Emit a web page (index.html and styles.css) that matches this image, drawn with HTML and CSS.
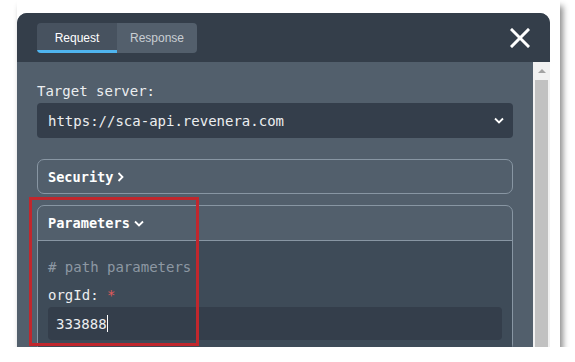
FILE: index.html
```html
<!DOCTYPE html>
<html lang="en">
<head>
  <meta charset="UTF-8">
  <meta name="viewport" content="width=device-width, initial-scale=1.0">
  <title>Try it - Request</title>
  <link rel="stylesheet" href="styles.css">
</head>
<body>
  <div class="shot">
    <div class="panel">
      <div class="panel-head">
        <div class="tabs">
          <div class="tab active">Request</div>
          <div class="tab">Response</div>
        </div>
        <svg class="close" width="20" height="20" viewBox="0 0 20 20">
          <path d="M2 2 L18 18 M18 2 L2 18" stroke="#fff" stroke-width="3" stroke-linecap="square"/>
        </svg>
      </div>

      <div class="panel-body">
        <div class="content">
          <div class="label">Target server:</div>
          <div class="select">
            <span>https://sca-api.revenera.com</span>
            <svg width="10" height="7" viewBox="0 0 10 7">
              <path d="M1 1.5 L5 5.5 L9 1.5" fill="none" stroke="#fff" stroke-width="1.8"/>
            </svg>
          </div>

          <div class="section">
            <div class="section-head">
              Security
              <svg width="7" height="10" viewBox="0 0 7 10">
                <path d="M1.5 1 L5.5 5 L1.5 9" fill="none" stroke="#fff" stroke-width="1.8"/>
              </svg>
            </div>
          </div>

          <div class="section open">
            <div class="section-head">
              Parameters
              <svg width="10" height="7" viewBox="0 0 10 7">
                <path d="M1 1.5 L5 5.5 L9 1.5" fill="none" stroke="#fff" stroke-width="1.8"/>
              </svg>
            </div>
            <div class="section-body">
              <div class="comment"># path parameters</div>
              <div class="field-label">orgId: <span class="req">*</span></div>
              <div class="input">333888<span class="caret"></span></div>
            </div>
          </div>
        </div>

        <div class="scrollbar">
          <div class="arrow"></div>
          <div class="thumb"></div>
        </div>
      </div>
    </div>

    <!-- annotation box -->
    <div class="highlight"></div>
  </div>
</body>
</html>
```

FILE: styles.css
```css
body {
  margin: 0;
  background: #fff;
  font-family: "DejaVu Sans Mono", "Liberation Mono", monospace;
}
.shot {
  position: relative;
  width: 533px;
  height: 334px;
  margin-left: 17px;
  padding: 13px 10px 0 0;
  background: #fff;
  box-shadow: 3px 6px 6px rgba(0, 0, 0, 0.45);
}
.panel {
  height: 334px;
  border-radius: 10px 10px 0 0;
  overflow: hidden;
  background: #525f6c;
  display: flex;
  flex-direction: column;
}
.panel-head {
  height: 49px;
  box-sizing: border-box;
  padding: 10px 20px;
  background: #343e4a;
  display: flex;
  justify-content: space-between;
  align-items: center;
}
.tabs {
  display: flex;
  height: 30px;
  border-radius: 4px;
  overflow: hidden;
  font-family: "Liberation Sans", Arial, sans-serif;
  font-size: 12px;
}
.tab {
  width: 80px;
  box-sizing: border-box;
  display: flex;
  align-items: center;
  justify-content: center;
  background: #535f6c;
  color: #c9ced3;
}
.tab.active {
  background: #47525f;
  color: #fff;
  border-bottom: 3px solid #4fb4ef;
  padding-top: 3px;
}
.close {
  display: block;
}
.panel-body {
  flex: 1;
  display: flex;
  min-height: 0;
}
.content {
  flex: 1;
  padding: 19px 20px 0;
  color: #eceef0;
  font-size: 14px;
}
.label {
  line-height: 20px;
  margin-bottom: 2px;
}
.select {
  height: 35px;
  box-sizing: border-box;
  padding: 0 9px 0 11px;
  background: #343e4b;
  border-radius: 4px;
  display: flex;
  align-items: center;
  justify-content: space-between;
}
.section {
  margin-top: 21px;
  border: 1px solid #8896a3;
  border-radius: 7px;
}
.section + .section {
  margin-top: 11px;
}
.section-head {
  height: 33px;
  padding-left: 10px;
  display: flex;
  align-items: center;
  gap: 4px;
  font-weight: bold;
  color: #fff;
  font-size: 13.6px;
}
.section.open .section-head {
  height: 34px;
  border-bottom: 1px solid #8896a3;
}
.section-body {
  background: #3e4b58;
  padding: 16px 10px 10px;
}
.comment {
  color: #8d98a3;
  line-height: 20px;
}
.field-label {
  line-height: 20px;
  margin-top: 8px;
}
.req {
  color: #e05a5a;
}
.input {
  height: 33px;
  margin-top: 2px;
  box-sizing: border-box;
  padding-left: 8px;
  background: #343e4b;
  border-radius: 4px;
  display: flex;
  align-items: center;
}
.caret {
  width: 1px;
  height: 17px;
  background: #fff;
}
.scrollbar {
  width: 17px;
  background: #f1f1f1;
  display: flex;
  flex-direction: column;
  align-items: center;
}
.arrow {
  margin-top: 7px;
  width: 0;
  height: 0;
  border-left: 4px solid transparent;
  border-right: 4px solid transparent;
  border-bottom: 4px solid #a3a3a3;
}
.thumb {
  margin-top: 7px;
  width: 13px;
  flex: 1;
  background: #c1c1c1;
}
.highlight {
  position: absolute;
  left: 12px;
  top: 197px;
  width: 170px;
  height: 149px;
  box-sizing: border-box;
  border: 3px solid #c1272d;
}
```
